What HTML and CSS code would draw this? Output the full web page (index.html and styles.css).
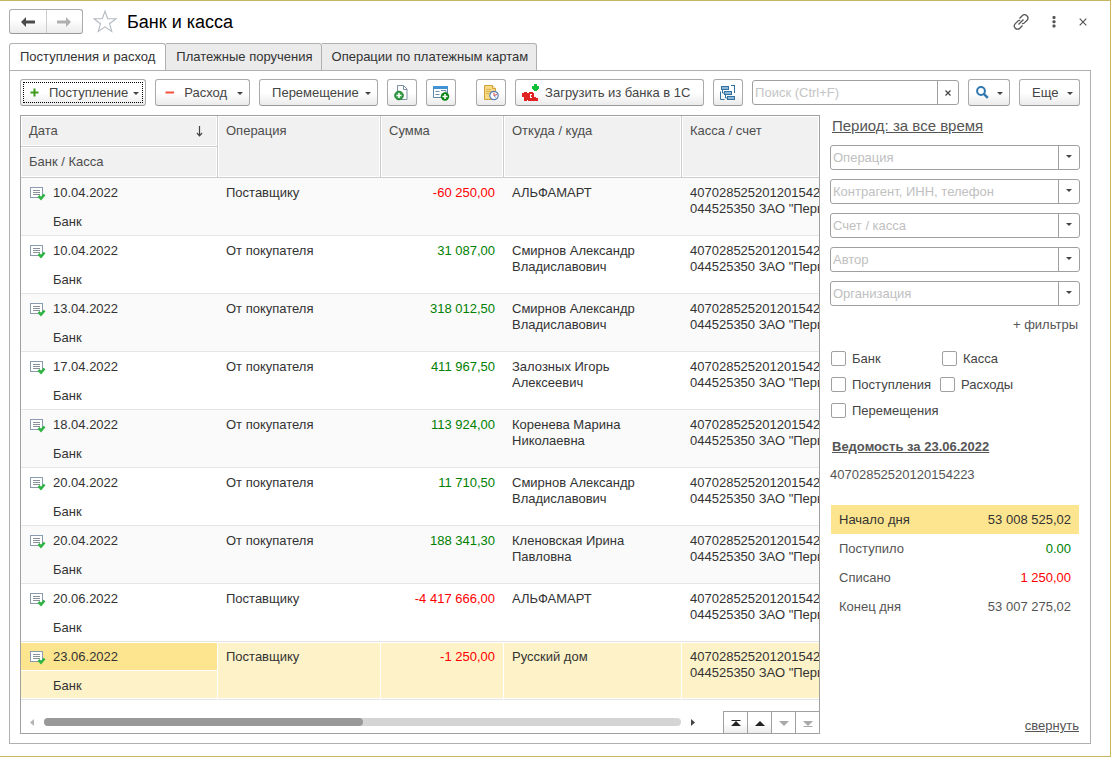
FILE: index.html
```html
<!DOCTYPE html>
<html lang="ru">
<head>
<meta charset="utf-8">
<title>Банк и касса</title>
<link rel="stylesheet" href="styles.css">
</head>
<body>
<svg class="sprite" aria-hidden="true">
  <symbol id="i-doc" viewBox="0 0 16 14">
    <rect x="0.5" y="0.5" width="12" height="10" fill="#fff" stroke="#8a9bb0"/>
    <path d="M3 3.500h7M3 5.500h7M3 7.500h7" stroke="#8b9199" fill="none"/>
    <path d="M8.500 9l2.500 2.500 3.500-4" stroke="#2fb344" stroke-width="2.600" fill="none"/>
  </symbol>
</svg>
<main class="window">
  <header class="head">
    <div class="nav">
      <button type="button" aria-label="Назад"><svg width="14" height="10" viewBox="0 0 14 10"><path d="M0 5l5-5v3.600h9v2.800H5V10z" fill="#4a4a4a"/></svg></button>
      <button type="button" aria-label="Вперед"><svg width="14" height="10" viewBox="0 0 14 10"><path d="M14 5L9 0v3.600H0v2.800h9V10z" fill="#b0b0b0"/></svg></button>
    </div>
    <button type="button" class="plain star" aria-label="Избранное"><svg width="24" height="23" viewBox="0 0 24 23"><path d="M12 1.200l2.700 7.400 8.300.2-6.500 4.900 2.300 7.700-6.800-4.600-6.800 4.600 2.300-7.700L1 8.800l8.300-.2z" fill="#fff" stroke="#b3bac2" stroke-width="1.100"/></svg></button>
    <h1>Банк и касса</h1>
    <div class="head-tools">
      <button type="button" class="plain" aria-label="Ссылка"><svg width="16" height="16" viewBox="0 0 16 16" fill="none" stroke="#555" stroke-width="1.300"><path d="M6.500 4.500l2.700-2.700a3 3 0 0 1 4.700 0 3.200 3.200 0 0 1 .2 4.400l-2.700 2.700a2.500 2.500 0 0 1-2.400.7M9.500 11.500l-2.700 2.700a3 3 0 0 1-4.500 0 3.200 3.200 0 0 1-.2-4.300l2.700-2.800a2.500 2.500 0 0 1 2.400-.6M5.500 10.500l5-5"/></svg></button>
      <button type="button" class="plain" aria-label="Меню"><svg width="4" height="12" viewBox="0 0 4 12" fill="#555"><rect x=".5" y="0" width="3" height="3" rx="1"/><rect x=".5" y="4.300" width="3" height="3" rx="1"/><rect x=".5" y="8.600" width="3" height="3" rx="1"/></svg></button>
      <button type="button" class="plain" aria-label="Закрыть"><svg width="8" height="8" viewBox="0 0 8 8"><path d="M.7.7l6.600 6.600M7.300.7L.7 7.300" stroke="#555" stroke-width="1.200"/></svg></button>
    </div>
  </header>

  <nav class="tabs" role="tablist">
    <button type="button" role="tab" class="tab active" aria-selected="true">Поступления и расход</button>
    <button type="button" role="tab" class="tab" aria-selected="false">Платежные поручения</button>
    <button type="button" role="tab" class="tab" aria-selected="false">Операции по платежным картам</button>
  </nav>

  <section class="panel">
    <div class="toolbar">
      <button type="button" class="btn focused"><svg width="9" height="9" viewBox="0 0 9 9"><path d="M4.500 0.500v8M.5 4.500h8" stroke="#3f9a1c" stroke-width="2"/></svg><span>Поступление</span><i class="caret"></i></button>
      <button type="button" class="btn expense"><svg width="9" height="9" viewBox="0 0 9 9"><path d="M.5 4.500h8.500" stroke="#f0503c" stroke-width="2"/></svg><span>Расход</span><i class="caret"></i></button>
      <button type="button" class="btn text transfer"><span>Перемещение</span><i class="caret"></i></button>
      <button type="button" class="btn icon" aria-label="Создать на основании"><svg width="16" height="16" viewBox="0 0 16 16"><path d="M3.500.5h6l3.500 3.500v10.500H3.500z" fill="#fff" stroke="#7d8fa3"/><path d="M9.500.5V4.500H13" fill="none" stroke="#7d8fa3"/><circle cx="5" cy="10.500" r="4.300" fill="#33a045" stroke="#1d7c30"/><path d="M5 8v5M2.500 10.500h5" stroke="#fff" stroke-width="1.600"/></svg></button>
      <button type="button" class="btn icon" aria-label="Создать документ"><svg width="17" height="16" viewBox="0 0 17 16"><path d="M.5 1.500h14v11H.5z" fill="#fff" stroke="#5e87ad"/><path d="M0 1h15v3H0z" fill="#4193d6"/><path d="M2.500 6.500h4M2.500 9.500h4M8 5.500h5v2.500" fill="none" stroke="#6e8ba6"/><circle cx="12" cy="11.500" r="4.200" fill="#0c8414"/><path d="M12 9v5M9.500 11.500h5" stroke="#fff" stroke-width="1.500"/></svg></button>
      <button type="button" class="btn icon apart" aria-label="Отложенные"><svg width="16" height="16" viewBox="0 0 16 16"><path d="M1.500.5h8l3 3v11h-11z" fill="#f7da83" stroke="#d0a23c"/><path d="M9.500.5v3h3" fill="#fff2c0" stroke="#d0a23c"/><path d="M3 4.500h5M3 6.500h6M3 8.500h3" stroke="#d9b44f"/><circle cx="11" cy="10.500" r="4.200" fill="#fff" stroke="#5b82b8" stroke-width="1.200"/><path d="M11 7.500v3l3-1" fill="none" stroke="#d94a3d"/><path d="M11 10.500l1.500 2" stroke="#5b82b8"/></svg></button>
      <button type="button" class="btn bank"><svg width="17" height="17" viewBox="0 0 17 17"><path d="M12 0h3v2h2v3h-1v1h-1v1h-3V6h-1V5h-1V2h2z" fill="#0fbf35"/><path d="M0 9h2V8h3v1h2V8h4v1h1v4h2v1h2v3H6v-1H5v1H2v-4H0z" fill="#e02323"/><path d="M8 10h2v1H9v2h1v1H8z" fill="#fff"/></svg><span>Загрузить из банка в 1С</span></button>
      <button type="button" class="btn icon" aria-label="Структура подчиненности"><svg width="16" height="16" viewBox="0 0 16 16"><g fill="#8db8da" stroke="#35719e"><rect x="1.500" y="1.500" width="7" height="3"/><rect x="4.500" y="6.500" width="7" height="3"/><rect x="7.500" y="11.500" width="7" height="3"/></g><path d="M11 .5h4M14.500.5V8M.5 6.500v8h4M2.500 4.500V8h2M5.500 9.500V13h2" fill="none" stroke="#35719e"/></svg></button>
      <div class="search"><input type="text" placeholder="Поиск (Ctrl+F)" aria-label="Поиск"><button type="button" aria-label="Очистить"><svg width="6" height="6" viewBox="0 0 6 6"><path d="M.5.5l5 5M5.500.5l-5 5" stroke="#444" stroke-width="1.200"/></svg></button></div>
      <button type="button" class="btn find" aria-label="Найти"><svg width="13" height="13" viewBox="0 0 13 13"><circle cx="5" cy="5" r="3.900" fill="none" stroke="#2f77ae" stroke-width="2"/><path d="M7.800 7.800l4 4" stroke="#2f77ae" stroke-width="2.400"/></svg><i class="caret"></i></button>
      <button type="button" class="btn text others"><span>Еще</span><i class="caret"></i></button>
    </div>

    <div class="body">
      <div class="list">
        <table class="ops">
          <colgroup><col class="c-date"><col class="c-op"><col class="c-sum"><col class="c-who"><col></colgroup>
          <thead>
            <tr><th class="sorted"><div>Дата<svg width="7" height="11" viewBox="0 0 7 11"><path d="M3.500 0v9.500M1 7l2.500 2.800L6 7" fill="none" stroke="#444" stroke-width="1.200"/></svg></div></th><th rowspan="2">Операция</th><th rowspan="2">Сумма</th><th rowspan="2">Откуда / куда</th><th rowspan="2">Касса / счет</th></tr>
            <tr><th>Банк / Касса</th></tr>
          </thead>
          <tbody>
            <tr><td class="date"><svg width="16" height="14"><use href="#i-doc"/></svg>10.04.2022</td><td rowspan="2">Поставщику</td><td rowspan="2" class="sum out">-60 250,00</td><td rowspan="2">АЛЬФАМАРТ</td><td rowspan="2" class="acc">40702852520120154223,<br>044525350 ЗАО "Первый"</td></tr>
            <tr><td class="bank-cell">Банк</td></tr>
          </tbody>
          <tbody>
            <tr><td class="date"><svg width="16" height="14"><use href="#i-doc"/></svg>10.04.2022</td><td rowspan="2">От покупателя</td><td rowspan="2" class="sum in">31 087,00</td><td rowspan="2">Смирнов Александр Владиславович</td><td rowspan="2" class="acc">40702852520120154223,<br>044525350 ЗАО "Первый"</td></tr>
            <tr><td class="bank-cell">Банк</td></tr>
          </tbody>
          <tbody>
            <tr><td class="date"><svg width="16" height="14"><use href="#i-doc"/></svg>13.04.2022</td><td rowspan="2">От покупателя</td><td rowspan="2" class="sum in">318 012,50</td><td rowspan="2">Смирнов Александр Владиславович</td><td rowspan="2" class="acc">40702852520120154223,<br>044525350 ЗАО "Первый"</td></tr>
            <tr><td class="bank-cell">Банк</td></tr>
          </tbody>
          <tbody>
            <tr><td class="date"><svg width="16" height="14"><use href="#i-doc"/></svg>17.04.2022</td><td rowspan="2">От покупателя</td><td rowspan="2" class="sum in">411 967,50</td><td rowspan="2">Залозных Игорь Алексеевич</td><td rowspan="2" class="acc">40702852520120154223,<br>044525350 ЗАО "Первый"</td></tr>
            <tr><td class="bank-cell">Банк</td></tr>
          </tbody>
          <tbody>
            <tr><td class="date"><svg width="16" height="14"><use href="#i-doc"/></svg>18.04.2022</td><td rowspan="2">От покупателя</td><td rowspan="2" class="sum in">113 924,00</td><td rowspan="2">Коренева Марина Николаевна</td><td rowspan="2" class="acc">40702852520120154223,<br>044525350 ЗАО "Первый"</td></tr>
            <tr><td class="bank-cell">Банк</td></tr>
          </tbody>
          <tbody>
            <tr><td class="date"><svg width="16" height="14"><use href="#i-doc"/></svg>20.04.2022</td><td rowspan="2">От покупателя</td><td rowspan="2" class="sum in">11 710,50</td><td rowspan="2">Смирнов Александр Владиславович</td><td rowspan="2" class="acc">40702852520120154223,<br>044525350 ЗАО "Первый"</td></tr>
            <tr><td class="bank-cell">Банк</td></tr>
          </tbody>
          <tbody>
            <tr><td class="date"><svg width="16" height="14"><use href="#i-doc"/></svg>20.04.2022</td><td rowspan="2">От покупателя</td><td rowspan="2" class="sum in">188 341,30</td><td rowspan="2">Кленовская Ирина Павловна</td><td rowspan="2" class="acc">40702852520120154223,<br>044525350 ЗАО "Первый"</td></tr>
            <tr><td class="bank-cell">Банк</td></tr>
          </tbody>
          <tbody>
            <tr><td class="date"><svg width="16" height="14"><use href="#i-doc"/></svg>20.06.2022</td><td rowspan="2">Поставщику</td><td rowspan="2" class="sum out">-4 417 666,00</td><td rowspan="2">АЛЬФАМАРТ</td><td rowspan="2" class="acc">40702852520120154223,<br>044525350 ЗАО "Первый"</td></tr>
            <tr><td class="bank-cell">Банк</td></tr>
          </tbody>
          <tbody class="selected">
            <tr><td class="date"><svg width="16" height="14"><use href="#i-doc"/></svg>23.06.2022</td><td rowspan="2">Поставщику</td><td rowspan="2" class="sum out">-1 250,00</td><td rowspan="2">Русский дом</td><td rowspan="2" class="acc">40702852520120154223,<br>044525350 ЗАО "Первый"</td></tr>
            <tr><td class="bank-cell">Банк</td></tr>
          </tbody>
        </table>
        <div class="list-foot">
          <svg width="4" height="7" viewBox="0 0 4 7"><path d="M4 0v7L0 3.500z" fill="#b5b5b5"/></svg>
          <div class="track"><div class="thumb"></div></div>
          <svg width="4" height="7" viewBox="0 0 4 7"><path d="M0 0v7l4-3.500z" fill="#444"/></svg>
          <div class="pager">
            <button type="button" aria-label="В начало"><svg width="10" height="8" viewBox="0 0 10 8" fill="#222"><path d="M.5 1h9v1h-9zM5 2l5 5H0z"/></svg></button>
            <button type="button" aria-label="Вверх"><svg width="10" height="8" viewBox="0 0 10 8" fill="#222"><path d="M5 2l5 5H0z"/></svg></button>
            <button type="button" class="off" aria-label="Вниз" disabled><svg width="10" height="8" viewBox="0 0 10 8" fill="#aaa"><path d="M5 7L0 2h10z"/></svg></button>
            <button type="button" class="off" aria-label="В конец" disabled><svg width="10" height="8" viewBox="0 0 10 8" fill="#aaa"><path d="M5 7L0 2h10zM.5 7h9v1h-9z"/></svg></button>
          </div>
        </div>
      </div>

      <aside class="side">
        <a href="#" class="period">Период: за все время</a>
        <div class="filters">
          <div class="combo"><select aria-label="Операция"><option>Операция</option></select></div>
          <div class="combo"><select aria-label="Контрагент, ИНН, телефон"><option>Контрагент, ИНН, телефон</option></select></div>
          <div class="combo"><select aria-label="Счет / касса"><option>Счет / касса</option></select></div>
          <div class="combo"><select aria-label="Автор"><option>Автор</option></select></div>
          <div class="combo"><select aria-label="Организация"><option>Организация</option></select></div>
        </div>
        <button type="button" class="plain more">+ фильтры</button>
        <div class="checks">
          <div class="check-row wide"><label><input type="checkbox">Банк</label><label><input type="checkbox">Касса</label></div>
          <div class="check-row"><label><input type="checkbox">Поступления</label><label><input type="checkbox">Расходы</label></div>
          <div class="check-row"><label><input type="checkbox">Перемещения</label></div>
        </div>
        <a href="#" class="report">Ведомость за 23.06.2022</a>
        <p class="account">40702852520120154223</p>
        <table class="totals">
          <tr class="hl"><th scope="row">Начало дня</th><td>53 008 525,02</td></tr>
          <tr><th scope="row">Поступило</th><td class="in">0.00</td></tr>
          <tr><th scope="row">Списано</th><td class="out">1 250,00</td></tr>
          <tr><th scope="row">Конец дня</th><td>53 007 275,02</td></tr>
        </table>
        <a href="#" class="collapse">свернуть</a>
      </aside>
    </div>
  </section>
</main>
</body>
</html>
```

FILE: styles.css
```css
* { box-sizing: border-box; }

body {
  margin: 0;
  background: #fff;
  color: #333;
  font: 13px/16px "Liberation Sans", Arial, sans-serif;
}

button, input, select { font: inherit; color: inherit; }
svg { display: block; flex: none; }
.sprite { position: absolute; width: 0; height: 0; }

.window {
  display: flex;
  flex-direction: column;
  min-height: 100vh;
  padding: 8px 19px 12px 9px;
  border: 1px solid #c8b560;
  border-left: 0;
}

.plain { padding: 0; border: 0; background: none; }

/* Header */
.head { display: flex; align-items: center; height: 25px; }
.nav {
  display: flex;
  width: 74px;
  height: 25px;
  border: 1px solid #aaa;
  border-bottom-color: #999;
  border-radius: 3px;
  background: linear-gradient(#fff 40%, #ececec);
}
.nav button {
  display: flex;
  flex: 1;
  align-items: center;
  justify-content: center;
  padding: 0;
  border: 0;
  background: none;
}
.nav button + button { border-left: 1px solid #ccc; }
.star { margin-left: 10px; }
h1 {
  margin: 0 0 0 10px;
  color: #000;
  font-size: 18px;
  font-weight: 400;
  line-height: 24px;
}
.head-tools {
  display: flex;
  align-items: center;
  gap: 23px;
  margin-left: auto;
  padding-right: 4px;
}

/* Tabs */
.tabs { display: flex; margin: 9px 0 -1px; }
.tab {
  height: 28px;
  padding: 0 8px 0 10px;
  border: 1px solid #b0b0b0;
  border-left-width: 0;
  border-radius: 0 3px 0 0;
  background: #ebebeb;
  color: #333;
}
.tab.active {
  padding-right: 10px;
  border-left-width: 1px;
  border-bottom-color: #fff;
  border-radius: 3px 3px 0 0;
  background: #fff;
}

.panel {
  display: flex;
  flex: 1;
  flex-direction: column;
  gap: 9px;
  padding: 8px 10px 9px;
  border: 1px solid #b0b0b0;
}

/* Toolbar */
.toolbar { display: flex; gap: 9px; }
.btn {
  display: flex;
  align-items: center;
  gap: 10px;
  height: 27px;
  padding: 0 6px 0 9px;
  border: 1px solid #aaa;
  border-bottom-color: #999;
  border-radius: 3px;
  background: linear-gradient(#fff 50%, #ebebeb);
  color: #444;
  white-space: nowrap;
}
.btn span + .caret { margin-left: auto; }
.btn.focused { min-width: 126px; gap: 5px; outline: 1px dotted #000; outline-offset: -4px; }
.btn.focused span { padding-left: 5px; }
.btn.expense { min-width: 94px; }
.btn.text { gap: 4px; padding-left: 12px; }
.btn.transfer { min-width: 119px; }
.btn.others { min-width: 61px; }
.btn.icon { width: 30px; padding: 0; justify-content: center; }
.btn.apart { margin-left: 11px; }
.btn.bank { min-width: 189px; gap: 6px; padding: 0 12px 0 6px; }
.btn.find { gap: 8px; padding: 0 6px 0 7px; }
.caret {
  margin-top: 2px;
  border: 3px solid transparent;
  border-top-color: #444;
  border-bottom-width: 0;
}
.search {
  display: flex;
  flex: 1;
  min-width: 0;
  height: 25px;
  margin-top: 1px;
  border: 1px solid #a0a0a0;
  border-radius: 3px;
}
.search input {
  flex: 1;
  min-width: 0;
  padding: 0 2px;
  border: 0;
  outline: 0;
  background: none;
}
.search input::placeholder { color: #c4c4c4; opacity: 1; }
.search button {
  display: flex;
  align-items: center;
  justify-content: center;
  width: 21px;
  padding: 0;
  border: 0;
  border-left: 1px solid #a0a0a0;
  background: none;
}

/* Main area */
.body { display: flex; flex: 1; gap: 10px; }
.list {
  display: flex;
  flex: 1;
  flex-direction: column;
  min-width: 0;
  overflow: hidden;
  border: 1px solid #a0a0a0;
}
.ops {
  width: 100%;
  border-spacing: 0;
  table-layout: fixed;
}
.c-date { width: 197px; }
.c-op { width: 163px; }
.c-sum { width: 123px; }
.c-who { width: 178px; }
.ops th {
  height: 31px;
  padding: 7px 8px;
  border-right: 1px solid #ccc;
  border-bottom: 1px solid #ccc;
  background: #f1f1f1;
  box-shadow: inset 0 0 0 1px #fff;
  color: #4d4d4d;
  font-weight: 400;
  text-align: left;
  vertical-align: top;
}
.ops th:last-child:not(:first-child) { border-right: 0; }
.sorted div { display: flex; align-items: center; justify-content: space-between; padding-right: 6px; }
.ops td {
  height: 29px;
  padding: 7px 8px 0;
  border-bottom: 1px solid #e5e5e5;
  vertical-align: top;
}
.ops tbody:nth-of-type(odd) { background: #fafafa; }
.ops td.date { border-bottom: 0; }
.date svg { float: left; margin: 2px 7px 0 1px; }
.ops .bank-cell { padding-left: 32px; }
.ops .sum { padding-right: 9px; text-align: right; }
.ops .acc { overflow: hidden; white-space: nowrap; }
.in { color: #008000; }
.out { color: #f00; }
.ops .selected td {
  border-right: 1px solid #fff;
  background: #fdf2c8;
  box-shadow: inset 0 1px #fff, inset 0 -1px #fff;
}
.ops .selected td.date { background: #fde58f; }
.ops .selected td.bank-cell { box-shadow: inset 0 -1px #fff; }
.ops .selected td.sum { padding-right: 8px; }
.ops .selected td.acc { border-right: 0; }

.list-foot {
  display: flex;
  align-items: center;
  height: 22px;
  margin-top: auto;
  padding-left: 9px;
}
.track {
  flex: 1;
  height: 8px;
  margin: 0 10px;
  border-radius: 4px;
  background: #d5d5d5;
}
.thumb {
  width: 50%;
  height: 8px;
  border-radius: 4px;
  background: #999;
}
.pager { display: flex; height: 22px; margin-left: 28px; }
.pager button {
  display: flex;
  align-items: center;
  justify-content: center;
  width: 24px;
  padding: 0;
  border: 1px solid #a0a0a0;
  border-width: 1px 0 0 1px;
  background: linear-gradient(#fff 50%, #ececec);
}
.pager .off { background: #fff; }

/* Sidebar */
.side {
  display: flex;
  flex-direction: column;
  align-items: flex-start;
  width: 250px;
  color: #555;
}
.side a { color: #555; }
.period { margin: 3px 2px 11px; font-size: 15px; }
.filters { display: grid; gap: 9px; width: 100%; }
.combo { position: relative; display: flex; }
.combo select {
  width: 100%;
  height: 25px;
  padding: 0 24px 0 2px;
  border: 1px solid #a0a0a0;
  border-radius: 3px;
  outline: 0;
  appearance: none;
  background: #fff;
  color: #c0c0c0;
}
.combo::before {
  content: "";
  position: absolute;
  top: 1px;
  right: 21px;
  bottom: 1px;
  border-left: 1px solid #a0a0a0;
  pointer-events: none;
}
.combo::after {
  content: "";
  position: absolute;
  top: 10px;
  right: 8px;
  border: 3px solid transparent;
  border-top-color: #444;
  border-bottom-width: 0;
  pointer-events: none;
}
.more { align-self: flex-end; margin: 11px 2px 0 0; }
.checks { display: grid; gap: 10px; margin: 18px 0 20px 1px; color: #444; }
.check-row { display: flex; gap: 9px; }
.check-row label { display: flex; align-items: flex-start; gap: 6px; }
.check-row.wide label:first-child { width: 102px; }
.check-row input {
  width: 15px;
  height: 15px;
  margin: 0;
  border: 1px solid #a0a0a0;
  border-radius: 2px;
  appearance: none;
  background: #fff;
}
.report { margin-left: 2px; font-weight: 700; }
.account { margin: 12px 0 22px; }
.totals { width: 248px; margin: 0 1px; border-spacing: 0; }
.totals th, .totals td { height: 29px; padding: 0 8px; font-weight: 400; text-align: left; }
.totals td { text-align: right; }
.totals .hl { background: #fde58f; color: #333; }
.collapse { align-self: flex-end; margin: auto 1px 0 0; }
```
